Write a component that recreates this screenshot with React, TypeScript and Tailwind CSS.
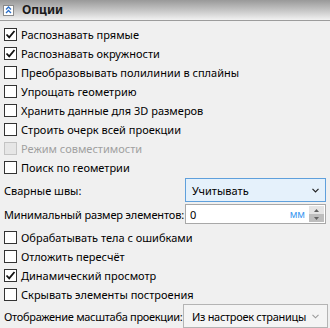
import React from "react";

function Check({ checked, disabled, label }: { checked?: boolean; disabled?: boolean; label: string }) {
  return (
    <div className="flex items-center h-[19px] pl-[4px] gap-[4px] whitespace-nowrap">
      <div
        className={`w-[13px] h-[13px] shrink-0 flex items-center justify-center border ${
          disabled ? "border-[#c4c4c4] bg-[#e6e6e6]" : "border-[#333333] bg-white"
        }`}
      >
        {checked && (
          <svg width="11" height="11" viewBox="0 0 11 11">
            <path d="M1.5 5.5 L4.2 8.3 L9.5 2" fill="none" stroke="#111" strokeWidth="1.8" />
          </svg>
        )}
      </div>
      <span className={disabled ? "text-[#a0a0a0]" : "text-black"}>{label}</span>
    </div>
  );
}

export default function App() {
  const top = [
    { label: "Распознавать прямые", checked: true },
    { label: "Распознавать окружности", checked: true },
    { label: "Преобразовывать полилинии в сплайны" },
    { label: "Упрощать геометрию" },
    { label: "Хранить данные для 3D размеров" },
    { label: "Строить очерк всей проекции" },
    { label: "Режим совместимости", disabled: true },
    { label: "Поиск по геометрии" },
  ];
  const bottom = [
    { label: "Обрабатывать тела с ошибками" },
    { label: "Отложить пересчёт" },
    { label: "Динамический просмотр", checked: true },
    { label: "Скрывать элементы построения" },
  ];

  return (
    <div
      className="w-[330px] h-[328px] overflow-hidden bg-[#f0f0f0] text-[11px] leading-none"
      style={{ fontFamily: '"Noto Sans", "Open Sans", sans-serif' }}
    >
      {/* header */}
      <div className="h-[21px] flex items-center gap-[8px] pl-[3px] bg-gradient-to-b from-[#999999] to-[#f2f2f2] border-b border-[#9c9c9c]">
        <div className="w-[11px] h-[11px] border border-[#8a8a8a] bg-white flex items-center justify-center">
          <svg width="7" height="8" viewBox="0 0 7 8">
            <path d="M1 3.5 L3.5 1 L6 3.5 M1 7 L3.5 4.5 L6 7" fill="none" stroke="#2a6fc9" strokeWidth="1.3" />
          </svg>
        </div>
        <span className="font-bold text-[12px] text-[#1a1a1a]">Опции</span>
      </div>

      <div className="pt-[4px]">
        {top.map((r) => (
          <Check key={r.label} {...r} />
        ))}
      </div>

      {/* welds */}
      <div className="flex items-center h-[24px] mt-[1px] pl-[4px] pr-[4px] whitespace-nowrap">
        <span className="flex-1 min-w-0">Сварные швы:</span>
        <div className="w-[141px] shrink-0 h-[24px] flex items-center justify-between pl-[6px] pr-[6px] bg-[#e5f1fb] border border-[#5fa0dc]">
          <span>Учитывать</span>
          <svg width="7" height="5" viewBox="0 0 7 5">
            <path d="M0.5 0.8 L3.5 3.8 L6.5 0.8" fill="none" stroke="#222" strokeWidth="1.2" />
          </svg>
        </div>
      </div>

      {/* min size */}
      <div className="flex items-center h-[20px] mt-[2px] pl-[4px] pr-[4px] whitespace-nowrap">
        <span className="flex-1 min-w-0 tracking-[-0.15px]">Минимальный размер элементов:</span>
        <div className="w-[141px] shrink-0 h-[20px] flex items-center bg-white border border-[#a8a8a8] pl-[4px] pr-[1px]">
          <span className="flex-1">0</span>
          <span className="text-[#3a98f0] text-[10px] mr-[4px]">мм</span>
          <div className="w-[15px] h-[16px] flex flex-col">
            <div className="h-[8px] bg-[#e4e4e4] flex items-center justify-center">
              <svg width="5" height="3" viewBox="0 0 5 3">
                <path d="M0 3 L2.5 0 L5 3 Z" fill="#606060" />
              </svg>
            </div>
            <div className="h-[8px] bg-[#bdbdbd] flex items-center justify-center">
              <svg width="5" height="3" viewBox="0 0 5 3">
                <path d="M0 0 L2.5 3 L5 0 Z" fill="#606060" />
              </svg>
            </div>
          </div>
        </div>
      </div>

      <div className="pt-[4px]">
        {bottom.map((r) => (
          <Check key={r.label} {...r} />
        ))}
      </div>

      {/* scale */}
      <div className="flex items-center h-[24px] pl-[4px] pr-[2px] whitespace-nowrap">
        <span className="flex-1 min-w-0 tracking-[-0.3px]">Отображение масштаба проекции:</span>
        <div className="w-[145px] shrink-0 h-[24px] flex items-center justify-between pl-[8px] pr-[8px] bg-[#f4f4f4] border border-[#b4b4b4]">
          <span className="tracking-[-0.3px]">Из настроек страницы</span>
          <svg width="7" height="5" viewBox="0 0 7 5">
            <path d="M0.5 0.8 L3.5 3.8 L6.5 0.8" fill="none" stroke="#9a9a9a" strokeWidth="1.1" />
          </svg>
        </div>
      </div>
    </div>
  );
}
